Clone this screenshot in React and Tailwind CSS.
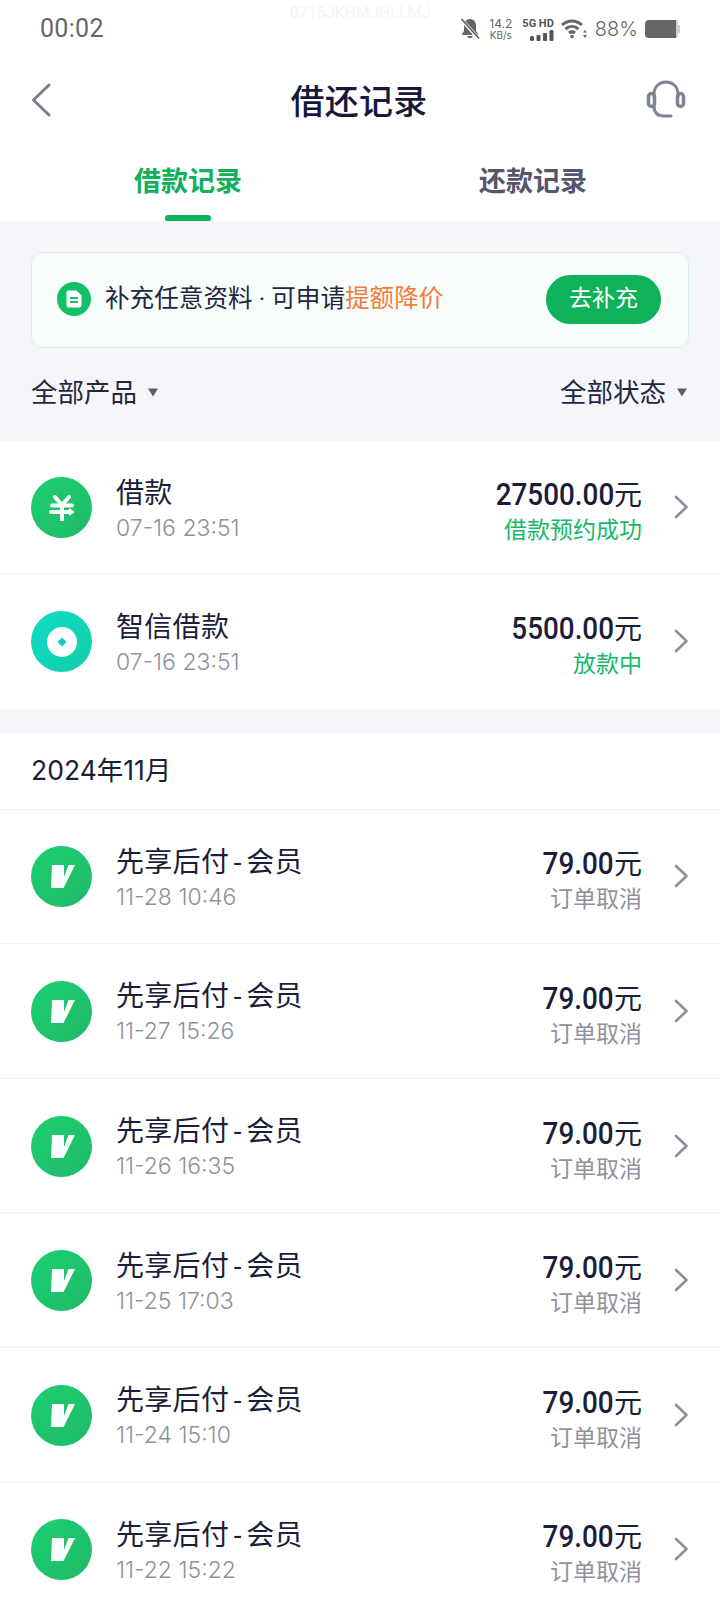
const FONT = "font-['Roboto','Noto_Sans_CJK_SC',sans-serif]";

function Chevron() {
  return (
    <svg width="15" height="24" viewBox="0 0 15 24" fill="none" className="ml-[32px] shrink-0">
      <path d="M2 2 L12.5 12 L2 22" stroke="#8c8e98" strokeWidth="2.6" strokeLinecap="round" strokeLinejoin="round" />
    </svg>
  );
}

function YenIcon() {
  return (
    <div className="w-[61px] h-[61px] rounded-full shrink-0 bg-gradient-to-br from-[#1ccf72] to-[#1fb968] flex items-center justify-center">
      <svg width="26" height="26" viewBox="0 0 26 26" fill="none" stroke="white" strokeWidth="4">
        <path d="M6 2 L13 10 L20 2" strokeLinecap="round" />
        <path d="M3 10.5 H23" strokeLinecap="round" />
        <path d="M2 17 H22" strokeLinecap="round" />
        <path d="M13 10 V25" strokeLinecap="round" />
        <path d="M20 14 L24 17 L20 20" strokeWidth="2" fill="white" />
      </svg>
    </div>
  );
}

function CoinIcon() {
  return (
    <div className="w-[61px] h-[61px] rounded-full shrink-0 bg-gradient-to-br from-[#0cdcc2] to-[#14cdaa] flex items-center justify-center">
      <svg width="30" height="30" viewBox="0 0 30 30">
        <circle cx="15" cy="15" r="15" fill="white" />
        <path d="M15 10.5 L19.5 15 L15 19.5 L10.5 15 Z" fill="#14cfb2" />
      </svg>
    </div>
  );
}

function VIcon() {
  return (
    <div className="w-[61px] h-[61px] rounded-full shrink-0 bg-gradient-to-br from-[#1ccf72] to-[#1fb968]">
      <svg width="61" height="61" viewBox="0 0 61 61">
        <path d="M21 19 H33 V31 L37.5 19 H44 L32.5 42 H20 Z" fill="white" />
      </svg>
    </div>
  );
}

function Row({ icon, title, time, amount, status, statusClass, border = true, heightClass = "h-[134.6px]" }) {
  return (
    <div className={`${heightClass} flex items-center pl-[31px] pr-[31px] bg-white ${border ? "border-b border-[#f2f3f5]" : ""}`}>
      <div className="mt-[1px] shrink-0">{icon}</div>
      <div className="ml-[24px] flex flex-col pt-[5px]">
        <div className="text-[28px] leading-[36px] text-[#1b1e3a] tracking-[0.3px]">{title}</div>
        <div className="text-[23px] leading-[31px] mt-[1px] text-[#8f919d] font-['Inter','Roboto',sans-serif] font-light">{time}</div>
      </div>
      <div className="ml-auto flex flex-col items-end pt-[10px]">
        <div className="text-[#1b1e3a] leading-[36px] flex items-baseline">
          <span className="inline-block origin-right scale-x-[0.87] text-[32px] font-medium">{amount}</span>
          <span className="text-[28px]">元</span>
        </div>
        <div className={`text-[23px] leading-[34px] ${statusClass}`}>{status}</div>
      </div>
      <Chevron />
    </div>
  );
}

const orders = [
  "11-28 10:46",
  "11-27 15:26",
  "11-26 16:35",
  "11-25 17:03",
  "11-24 15:10",
  "11-22 15:22",
];

function Triangle() {
  return (
    <svg width="10" height="9" viewBox="0 0 10 9">
      <path d="M0 0.5 H10 L5 8.5 Z" fill="#5c5e6e" />
    </svg>
  );
}

function StatusBar() {
  return (
    <div className="relative h-[58px] flex items-center pl-[40px] pr-[40px] text-[#666]">
      <div className="absolute left-0 right-0 top-[1px] text-center text-[16px] text-[#f4f4f4]">0716JKHMJHLLMJ</div>
      <span className="text-[25px] tracking-[0.3px]">00:02</span>
      <div className="ml-auto flex items-center">
        <svg width="20" height="22" viewBox="0 0 20 22">
          <path d="M10 1 C6 1 4 4 4 8 V13 L1.5 17 H18.5 L16 13 V8 C16 4 14 1 10 1 Z" fill="#666" />
          <path d="M7.5 18 C7.5 21 12.5 21 12.5 18 Z" fill="#666" />
          <path d="M1 1 L19 21" stroke="white" strokeWidth="3.5" />
          <path d="M1.5 1 L19 20.5" stroke="#666" strokeWidth="1.8" />
        </svg>
        <div className="ml-[8px] w-[26px] flex flex-col text-center font-['Inter',sans-serif]">
          <span className="text-[12px] leading-[12px]">14.2</span>
          <span className="text-[10px] leading-[10px]">KB/s</span>
        </div>
        <div className="ml-[7px] w-[33px] flex flex-col items-end">
          <span className="text-[11px] leading-[12px] font-bold text-[#555] whitespace-nowrap">5G HD</span>
          <svg width="24" height="11" viewBox="0 0 24 11" fill="#555">
            <rect x="0" y="6" width="4" height="5" rx="1.5" />
            <rect x="6.5" y="5" width="4" height="6" rx="1" />
            <rect x="13" y="3" width="4" height="8" rx="1" />
            <rect x="19.5" y="0" width="4" height="11" rx="1" />
          </svg>
        </div>
        <svg width="26" height="20" viewBox="0 0 26 20" fill="none" stroke="#666" strokeWidth="3" className="ml-[7px]">
          <path d="M1 6 C7 0.5 15 0.5 21 6" />
          <path d="M4.5 10 C8.5 6.5 13.5 6.5 17.5 10" />
          <path d="M8 14 C10 12.5 12 12.5 14 14" />
          <circle cx="11" cy="17.5" r="1.8" fill="#666" stroke="none" />
          <path d="M24 11 L22 13.5 H26 Z M24 19 L22 16 H26 Z" fill="#666" stroke="none" />
        </svg>
        <span className="ml-[8px] text-[20px] font-['Inter',sans-serif] font-light">88%</span>
        <div className="ml-[7px] w-[35px] h-[18px] flex items-center">
          <div className="w-[31px] h-[18px] rounded-l-[4px] bg-[#666]" />
          <div className="w-[2px] h-[18px] rounded-r-[3px] bg-[#cfcfcf]" />
          <div className="w-[2px] h-[8px] bg-[#cfcfcf]" />
        </div>
      </div>
    </div>
  );
}

export default function App() {
  return (
    <div className={`w-[720px] h-[1612px] overflow-hidden bg-white ${FONT}`}>
      <StatusBar />
      <div className="h-[88px] grid grid-cols-[1fr_auto_1fr] items-center pl-[30px] pr-[34px]">
        <svg width="22" height="34" viewBox="0 0 22 34" fill="none" className="-mt-[4px]">
          <path d="M19 2 L3.5 17 L19 32" stroke="#7c7f8e" strokeWidth="3" strokeLinecap="round" strokeLinejoin="round" />
        </svg>
        <div className="text-[34px] font-medium text-[#17193a] tracking-[0.2px] ml-[2px]">借还记录</div>
        <svg width="40" height="40" viewBox="0 0 40 40" fill="none" stroke="#7e8493" className="justify-self-end -mt-[6px]">
          <path d="M8 18 V15 C8 -1 32 -1 32 15 V18" strokeWidth="3" />
          <rect x="2.5" y="14.5" width="6" height="13" rx="3" strokeWidth="3.5" />
          <rect x="31.5" y="14.5" width="6" height="13" rx="3" strokeWidth="3.5" />
          <path d="M8 27 C8 34 12 37 18 37 H25" strokeWidth="3" strokeLinecap="round" />
        </svg>
      </div>
      <div className="h-[75px] flex">
        <div className="w-[376px] relative flex justify-center pt-[16px]">
          <span className="text-[27px] font-bold text-[#10b15c] leading-[40px]">借款记录</span>
          <div className="absolute left-[165px] bottom-0 w-[46px] h-[6px] rounded-t-[3px] rounded-b-[2px] bg-[#10b15c]" />
        </div>
        <div className="w-[314px] flex justify-center pt-[16px]">
          <span className="text-[27px] font-bold text-[#55566a] leading-[40px]">还款记录</span>
        </div>
      </div>

      <div className="bg-[#f4f6fa] h-[220px] px-[31px] pt-[31px]">
        <div className="h-[96px] rounded-[12px] border border-[#dcefe6] bg-[#f6fdfb] flex items-center pl-[25px] pr-[27px] pb-[2px]">
          <div className="w-[34px] h-[34px] rounded-full bg-[#12c065] flex items-center justify-center shrink-0">
            <svg width="16" height="18" viewBox="0 0 16 18">
              <path d="M2.5 0.5 H10.5 L15.5 5.5 V15.5 A2 2 0 0 1 13.5 17.5 H2.5 A2 2 0 0 1 0.5 15.5 V2.5 A2 2 0 0 1 2.5 0.5 Z" fill="white" />
              <rect x="4" y="7" width="8" height="2" fill="#12c065" />
              <rect x="4" y="11" width="8" height="2" fill="#12c065" />
            </svg>
          </div>
          <div className="ml-[14px] text-[24.6px] text-[#24263f] whitespace-nowrap">
            补充任意资料 · 可申请<span className="text-[#f37c3c]">提额降价</span>
          </div>
          <div className="ml-auto w-[115px] h-[49px] rounded-full bg-[#0eb25a] text-white text-[23px] flex items-center justify-center">去补充</div>
        </div>
        <div className="mt-[25px] flex items-center justify-between text-[26.5px] text-[#24263f]">
          <div className="flex items-center gap-[11px]">
            <span>全部产品</span>
            <Triangle />
          </div>
          <div className="flex items-center gap-[11px] mr-[2px]">
            <span>全部状态</span>
            <Triangle />
          </div>
        </div>
      </div>

      <Row heightClass="h-[133px]" icon={<YenIcon />} title="借款" time="07-16 23:51" amount="27500.00" status="借款预约成功" statusClass="text-[#17b86b]" />
      <Row icon={<CoinIcon />} title="智信借款" time="07-16 23:51" amount="5500.00" status="放款中" statusClass="text-[#17b86b]" border={false} />
      <div className="h-[24px] bg-[#f4f6fa]" />
      <div className="h-[77px] flex items-center pl-[31px] text-[26.5px] text-[#1b1e3a] border-b border-[#f2f3f5] font-['Inter','Noto_Sans_CJK_SC',sans-serif]">2024年11月</div>
      {orders.map((t) => (
        <Row
          key={t}
          icon={<VIcon />}
          title={<>先享后付<span className="mx-[4.5px]">-</span>会员</>}
          time={t}
          amount="79.00"
          status="订单取消"
          statusClass="text-[#8f919d]"
        />
      ))}
    </div>
  );
}
